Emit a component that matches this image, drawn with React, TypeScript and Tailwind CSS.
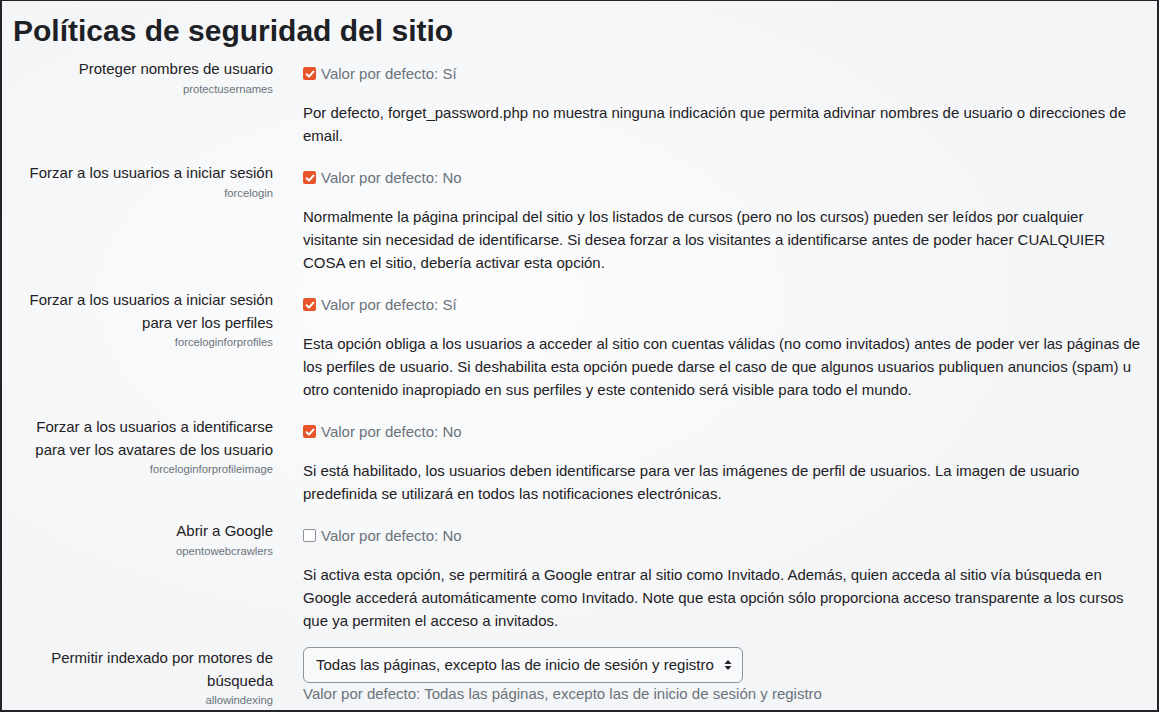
import React from "react";

type Setting = {
  label: string[];
  name: string;
  checked: boolean;
  def: string;
  help: string;
};

const settings: Setting[] = [
  {
    label: ["Proteger nombres de usuario"],
    name: "protectusernames",
    checked: true,
    def: "Sí",
    help: "Por defecto, forget_password.php no muestra ninguna indicación que permita adivinar nombres de usuario o direcciones de email.",
  },
  {
    label: ["Forzar a los usuarios a iniciar sesión"],
    name: "forcelogin",
    checked: true,
    def: "No",
    help: "Normalmente la página principal del sitio y los listados de cursos (pero no los cursos) pueden ser leídos por cualquier visitante sin necesidad de identificarse. Si desea forzar a los visitantes a identificarse antes de poder hacer CUALQUIER COSA en el sitio, debería activar esta opción.",
  },
  {
    label: ["Forzar a los usuarios a iniciar sesión", "para ver los perfiles"],
    name: "forceloginforprofiles",
    checked: true,
    def: "Sí",
    help: "Esta opción obliga a los usuarios a acceder al sitio con cuentas válidas (no como invitados) antes de poder ver las páginas de los perfiles de usuario. Si deshabilita esta opción puede darse el caso de que algunos usuarios publiquen anuncios (spam) u otro contenido inapropiado en sus perfiles y este contenido será visible para todo el mundo.",
  },
  {
    label: ["Forzar a los usuarios a identificarse", "para ver los avatares de los usuario"],
    name: "forceloginforprofileimage",
    checked: true,
    def: "No",
    help: "Si está habilitado, los usuarios deben identificarse para ver las imágenes de perfil de usuarios. La imagen de usuario predefinida se utilizará en todos las notificaciones electrónicas.",
  },
  {
    label: ["Abrir a Google"],
    name: "opentowebcrawlers",
    checked: false,
    def: "No",
    help: "Si activa esta opción, se permitirá a Google entrar al sitio como Invitado. Además, quien acceda al sitio vía búsqueda en Google accederá automáticamente como Invitado. Note que esta opción sólo proporciona acceso transparente a los cursos que ya permiten el acceso a invitados.",
  },
];

const Checkbox = ({ checked }: { checked: boolean }) =>
  checked ? (
    <span className="flex h-[13px] w-[13px] items-center justify-center rounded-[2px] bg-[#e8552b]">
      <svg width="10" height="10" viewBox="0 0 10 10" fill="none">
        <path d="M1.6 5.2 L4 7.5 L8.5 2.6" stroke="#fff" strokeWidth="1.9" strokeLinecap="round" strokeLinejoin="round" />
      </svg>
    </span>
  ) : (
    <span className="block h-[13px] w-[13px] rounded-[2px] border-[1.5px] border-[#8a8f99] bg-white" />
  );

const Label = ({ lines, name }: { lines: string[]; name: string }) => (
  <div className="w-[260px] shrink-0 text-right">
    {lines.map((l) => (
      <div key={l} className="leading-[22.5px] text-[#1d2125]">
        {l}
      </div>
    ))}
    <div className="text-[11.25px] leading-[16px] text-[#6a737b]">{name}</div>
  </div>
);

const App = () => {
  return (
    <div
      className="h-[712px] w-[1159px] overflow-hidden border-2 border-t-[1px] border-[#232427] bg-[#f4f5f7] bg-[radial-gradient(ellipse_at_38%_42%,#fcfcfd_0%,#f7f8f9_35%,#f4f5f7_65%)] pl-[11px] pr-[15px] text-[15px] text-[#1d2125]"
      style={{ fontFamily: '"Liberation Sans", Arial, sans-serif' }}
    >
      <h2 className="mb-[9px] pt-[12px] text-[30px] font-bold leading-[36px] text-[#1d2125]">
        Políticas de seguridad del sitio
      </h2>

      {settings.map((s) => (
        <div key={s.name} className="mb-[15.5px] flex gap-[30px]">
          <Label lines={s.label} name={s.name} />
          <div className="flex-1 pt-[4.5px]">
            <div className="flex items-center gap-[5px] leading-[22.5px] text-[#6a737b]">
              <Checkbox checked={s.checked} />
              <span>Valor por defecto: {s.def}</span>
            </div>
            <div className="mt-[15.5px] leading-[23px]">{s.help}</div>
          </div>
        </div>
      ))}

      <div className="flex gap-[30px]">
        <Label lines={["Permitir indexado por motores de", "búsqueda"]} name="allowindexing" />
        <div className="flex-1">
          <div className="flex h-[36px] w-[440px] items-center justify-between rounded-[6px] border border-[#8f959e] bg-white/40 pl-[12px] pr-[10px]">
            <span>Todas las páginas, excepto las de inicio de sesión y registro</span>
            <svg width="8" height="12" viewBox="0 0 8 12">
              <path d="M4 1 L7.5 5 H0.5 Z" fill="#1d2125" />
              <path d="M4 11 L7.5 7 H0.5 Z" fill="#1d2125" />
            </svg>
          </div>
          <div className="leading-[22px] text-[#6a737b]">
            Valor por defecto: Todas las páginas, excepto las de inicio de sesión y registro
          </div>
        </div>
      </div>
    </div>
  );
};

export default App;
